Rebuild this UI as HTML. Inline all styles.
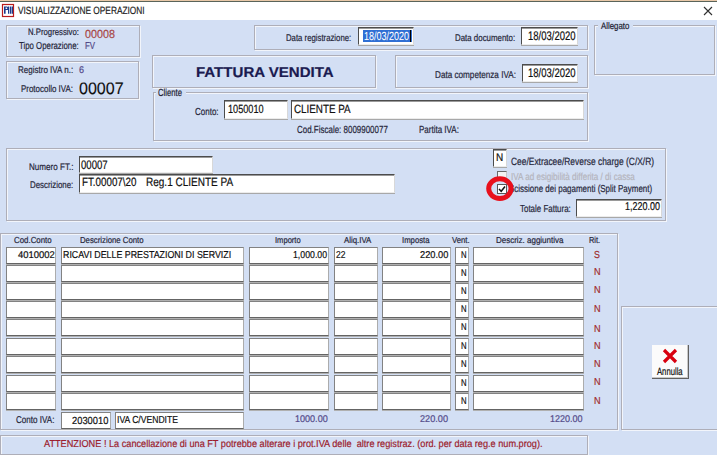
<!DOCTYPE html>
<html><head><meta charset="utf-8"><style>
html,body{margin:0;padding:0}
body{width:717px;height:455px;overflow:hidden;position:relative;background:#d3dff4;font-family:"Liberation Sans",sans-serif}
div{-webkit-text-stroke:0.2px currentColor;text-rendering:geometricPrecision}
</style></head><body>
<div style="position:absolute;left:0px;top:0px;width:717px;height:1px;background:#e8c8a8"></div>
<div style="position:absolute;left:0px;top:1px;width:717px;height:1px;background:#5a645a"></div>
<div style="position:absolute;left:0px;top:2px;width:717px;height:18px;background:#fff"></div>
<svg style="position:absolute;left:0;top:0" width="16" height="20"><rect x="2.5" y="4.5" width="11" height="12" fill="#fff" stroke="#b81c1c" stroke-width="1.2"/><path d="M4 6.6h1.6v7.2H4zM5.6 6.6h1.2a1.6 1.6 0 0 1 0 3.4H5.6v-1h1a.7.7 0 0 0 0-1.4h-1zM8 6.6h1.3v7.2H8zM10 6.6h1.3v7.2H10zM11.8 6.6h1.2v7.2h-1.2z" fill="#1c3c8c"/></svg>
<div style="position:absolute;left:17.80px;top:6px;font-size:10.47px;line-height:11px;font-weight:normal;color:#1c1c1c;white-space:pre;transform:scaleX(0.7946);transform-origin:0 0;">VISUALIZZAZIONE OPERAZIONI</div>
<svg style="position:absolute;left:703px;top:6px" width="10" height="10"><path d="M1 1L9 9M9 1L1 9" stroke="#303030" stroke-width="1.1"/></svg>
<div style="position:absolute;left:6px;top:25px;width:134px;height:32px;border:1px solid #aeaeb8;box-shadow:1px 1px 0 #f2f5fb, inset 1px 1px 0 #f2f5fb;box-sizing:border-box"></div>
<div style="position:absolute;left:6px;top:61px;width:133px;height:38px;border:1px solid #aeaeb8;box-shadow:1px 1px 0 #f2f5fb, inset 1px 1px 0 #f2f5fb;box-sizing:border-box"></div>
<div style="position:absolute;left:254px;top:25px;width:334px;height:25px;border:1px solid #aeaeb8;box-shadow:1px 1px 0 #f2f5fb, inset 1px 1px 0 #f2f5fb;box-sizing:border-box"></div>
<div style="position:absolute;left:152px;top:55px;width:224px;height:33px;border:1px solid #aeaeb8;box-shadow:1px 1px 0 #f2f5fb, inset 1px 1px 0 #f2f5fb;box-sizing:border-box"></div>
<div style="position:absolute;left:395px;top:55px;width:193px;height:33px;border:1px solid #aeaeb8;box-shadow:1px 1px 0 #f2f5fb, inset 1px 1px 0 #f2f5fb;box-sizing:border-box"></div>
<div style="position:absolute;left:153px;top:92px;width:435px;height:49px;border:1px solid #aeaeb8;box-shadow:1px 1px 0 #f2f5fb, inset 1px 1px 0 #f2f5fb;box-sizing:border-box"></div>
<div style="position:absolute;left:594px;top:25px;width:121px;height:50px;border:1px solid #aeaeb8;box-shadow:1px 1px 0 #f2f5fb, inset 1px 1px 0 #f2f5fb;box-sizing:border-box"></div>
<div style="position:absolute;left:6px;top:148px;width:660px;height:73px;border:1px solid #aeaeb8;box-shadow:1px 1px 0 #f2f5fb, inset 1px 1px 0 #f2f5fb;box-sizing:border-box"></div>
<div style="position:absolute;left:0px;top:233px;width:618px;height:197px;border:1px solid #aeaeb8;box-shadow:1px 1px 0 #f2f5fb, inset 1px 1px 0 #f2f5fb;box-sizing:border-box"></div>
<div style="position:absolute;left:621px;top:306px;width:98px;height:124px;border:1px solid #aeaeb8;box-shadow:1px 1px 0 #f2f5fb, inset 1px 1px 0 #f2f5fb;box-sizing:border-box"></div>
<div style="position:absolute;left:0px;top:435px;width:588px;height:20px;border:1px solid #aeaeb8;box-shadow:1px 1px 0 #f2f5fb, inset 1px 1px 0 #f2f5fb;box-sizing:border-box"></div>
<div style="position:absolute;left:27.70px;top:27px;font-size:9.30px;line-height:10px;font-weight:normal;color:#26263a;white-space:pre;transform:scaleX(0.8344);transform-origin:0 0;">N.Progressivo:</div>
<div style="position:absolute;left:18.80px;top:41px;font-size:10.03px;line-height:11px;font-weight:normal;color:#26263a;white-space:pre;transform:scaleX(0.7811);transform-origin:0 0;">Tipo Operazione:</div>
<div style="position:absolute;left:84.80px;top:28px;font-size:11.77px;line-height:13px;font-weight:normal;color:#a84848;white-space:pre;transform:scaleX(0.9132);transform-origin:0 0;">00008</div>
<div style="position:absolute;left:84.80px;top:41px;font-size:10.03px;line-height:11px;font-weight:normal;color:#524888;white-space:pre;transform:scaleX(0.7802);transform-origin:0 0;">FV</div>
<div style="position:absolute;left:17.80px;top:65px;font-size:9.74px;line-height:11px;font-weight:normal;color:#26263a;white-space:pre;transform:scaleX(0.8246);transform-origin:0 0;">Registro IVA n.:</div>
<div style="position:absolute;left:79.00px;top:65px;font-size:9.74px;line-height:11px;font-weight:normal;color:#524888;white-space:pre;transform:scaleX(0.9234);transform-origin:0 0;">6</div>
<div style="position:absolute;left:21.00px;top:84px;font-size:9.74px;line-height:11px;font-weight:normal;color:#26263a;white-space:pre;transform:scaleX(0.8165);transform-origin:0 0;">Protocollo IVA:</div>
<div style="position:absolute;left:79.30px;top:79px;font-size:16.57px;line-height:19px;font-weight:normal;color:#101010;white-space:pre;transform:scaleX(0.9700);transform-origin:0 0;-webkit-text-stroke:0.1px #101010">00007</div>
<div style="position:absolute;left:286.30px;top:33px;font-size:9.74px;line-height:11px;font-weight:normal;color:#26263a;white-space:pre;transform:scaleX(0.7977);transform-origin:0 0;">Data registrazione:</div>
<div style="position:absolute;left:358px;top:27px;width:56px;height:18px;box-sizing:border-box;background:#fff;border-top:1px solid #4c4c4c;border-left:1px solid #4c4c4c;border-right:1px solid #d8d8d8;border-bottom:1px solid #ececec;box-shadow:inset 0 1px 0 #9a9a9a, 0 1px 0 #a8a8a8"></div>
<div style="position:absolute;left:363px;top:29.5px;width:48.5px;height:12.0px;background:#2f6fd4"></div>
<div style="position:absolute;left:364.00px;top:30px;font-size:11.77px;line-height:13px;font-weight:normal;color:#fff;white-space:pre;transform:scaleX(0.7637);transform-origin:0 0;-webkit-text-stroke:0.05px #fff">18/03/2020</div>
<div style="position:absolute;left:410px;top:29.5px;width:1px;height:12.0px;background:#000"></div>
<div style="position:absolute;left:454.50px;top:33px;font-size:9.74px;line-height:11px;font-weight:normal;color:#26263a;white-space:pre;transform:scaleX(0.8103);transform-origin:0 0;">Data documento:</div>
<div style="position:absolute;left:521px;top:27px;width:57px;height:18px;box-sizing:border-box;background:#fff;border-top:1px solid #4c4c4c;border-left:1px solid #4c4c4c;border-right:1px solid #d8d8d8;border-bottom:1px solid #ececec;box-shadow:inset 0 1px 0 #9a9a9a, 0 1px 0 #a8a8a8"></div>
<div style="position:absolute;left:527.50px;top:29px;font-size:12.50px;line-height:14px;font-weight:normal;color:#101010;white-space:pre;transform:scaleX(0.7592);transform-origin:0 0;">18/03/2020</div>
<div style="position:absolute;left:195.80px;top:65px;font-size:14.24px;line-height:16px;font-weight:bold;color:#1a1a50;white-space:pre;transform:scaleX(1.0575);transform-origin:0 0;">FATTURA VENDITA</div>
<div style="position:absolute;left:435.00px;top:70px;font-size:9.88px;line-height:11px;font-weight:normal;color:#26263a;white-space:pre;transform:scaleX(0.8252);transform-origin:0 0;">Data competenza IVA:</div>
<div style="position:absolute;left:522px;top:64px;width:56px;height:18px;box-sizing:border-box;background:#fff;border-top:1px solid #4c4c4c;border-left:1px solid #4c4c4c;border-right:1px solid #d8d8d8;border-bottom:1px solid #ececec;box-shadow:inset 0 1px 0 #9a9a9a, 0 1px 0 #a8a8a8"></div>
<div style="position:absolute;left:527.50px;top:66px;font-size:12.50px;line-height:14px;font-weight:normal;color:#101010;white-space:pre;transform:scaleX(0.7592);transform-origin:0 0;">18/03/2020</div>
<div style="position:absolute;left:156px;top:89px;width:30px;height:8px;background:#d3dff4"></div>
<div style="position:absolute;left:158.00px;top:88px;font-size:10.32px;line-height:11px;font-weight:normal;color:#202030;white-space:pre;transform:scaleX(0.7471);transform-origin:0 0;">Cliente</div>
<div style="position:absolute;left:194.70px;top:107px;font-size:10.17px;line-height:11px;font-weight:normal;color:#26263a;white-space:pre;transform:scaleX(0.7874);transform-origin:0 0;">Conto:</div>
<div style="position:absolute;left:224px;top:100px;width:64px;height:19px;box-sizing:border-box;background:#fff;border-top:1px solid #4c4c4c;border-left:1px solid #4c4c4c;border-right:1px solid #d8d8d8;border-bottom:1px solid #ececec;box-shadow:inset 0 1px 0 #9a9a9a, 0 1px 0 #a8a8a8"></div>
<div style="position:absolute;left:227.80px;top:102px;font-size:11.92px;line-height:14px;font-weight:normal;color:#101010;white-space:pre;transform:scaleX(0.7673);transform-origin:0 0;">1050010</div>
<div style="position:absolute;left:291px;top:100px;width:293px;height:19px;box-sizing:border-box;background:#fff;border-top:1px solid #4c4c4c;border-left:1px solid #4c4c4c;border-right:1px solid #d8d8d8;border-bottom:1px solid #ececec;box-shadow:inset 0 1px 0 #9a9a9a, 0 1px 0 #a8a8a8"></div>
<div style="position:absolute;left:293.80px;top:102px;font-size:11.92px;line-height:14px;font-weight:normal;color:#101010;white-space:pre;transform:scaleX(0.8258);transform-origin:0 0;">CLIENTE PA</div>
<div style="position:absolute;left:297.30px;top:125px;font-size:10.32px;line-height:11px;font-weight:normal;color:#26263a;white-space:pre;transform:scaleX(0.7729);transform-origin:0 0;">Cod.Fiscale: 8009900077</div>
<div style="position:absolute;left:418.60px;top:125px;font-size:10.32px;line-height:11px;font-weight:normal;color:#26263a;white-space:pre;transform:scaleX(0.7759);transform-origin:0 0;">Partita IVA:</div>
<div style="position:absolute;left:598px;top:22px;width:35px;height:8px;background:#d3dff4"></div>
<div style="position:absolute;left:601.00px;top:21px;font-size:9.45px;line-height:11px;font-weight:normal;color:#202030;white-space:pre;transform:scaleX(0.8288);transform-origin:0 0;">Allegato</div>
<div style="position:absolute;left:28.90px;top:162px;font-size:9.59px;line-height:11px;font-weight:normal;color:#26263a;white-space:pre;transform:scaleX(0.8433);transform-origin:0 0;">Numero FT.:</div>
<div style="position:absolute;left:79px;top:156px;width:134px;height:16.5px;box-sizing:border-box;background:#fff;border-top:1px solid #4c4c4c;border-left:1px solid #4c4c4c;border-right:1px solid #d8d8d8;border-bottom:1px solid #ececec;box-shadow:inset 0 1px 0 #9a9a9a, 0 1px 0 #a8a8a8"></div>
<div style="position:absolute;left:80.90px;top:158px;font-size:12.35px;line-height:14px;font-weight:normal;color:#101010;white-space:pre;transform:scaleX(0.7742);transform-origin:0 0;">00007</div>
<div style="position:absolute;left:29.60px;top:180px;font-size:9.74px;line-height:11px;font-weight:normal;color:#26263a;white-space:pre;transform:scaleX(0.8081);transform-origin:0 0;">Descrizione:</div>
<div style="position:absolute;left:79px;top:174px;width:316px;height:18.5px;box-sizing:border-box;background:#fff;border-top:1px solid #4c4c4c;border-left:1px solid #4c4c4c;border-right:1px solid #d8d8d8;border-bottom:1px solid #ececec;box-shadow:inset 0 1px 0 #9a9a9a, 0 1px 0 #a8a8a8"></div>
<div style="position:absolute;left:81.60px;top:175px;font-size:12.06px;line-height:14px;font-weight:normal;color:#101010;white-space:pre;transform:scaleX(0.8125);transform-origin:0 0;">FT.00007\20</div>
<div style="position:absolute;left:146.10px;top:175px;font-size:12.06px;line-height:14px;font-weight:normal;color:#101010;white-space:pre;transform:scaleX(0.8302);transform-origin:0 0;">Reg.1 CLIENTE PA</div>
<div style="position:absolute;left:493px;top:149px;width:13.5px;height:18px;box-sizing:border-box;background:#fff;border-top:1px solid #4c4c4c;border-left:1px solid #4c4c4c;border-right:1px solid #d8d8d8;border-bottom:1px solid #ececec;box-shadow:inset 0 1px 0 #9a9a9a, 0 1px 0 #a8a8a8"></div>
<div style="position:absolute;left:496.20px;top:152px;font-size:11.05px;line-height:12px;font-weight:normal;color:#101010;white-space:pre;transform:scaleX(0.9028);transform-origin:0 0;">N</div>
<div style="position:absolute;left:511.00px;top:157px;font-size:10.47px;line-height:11px;font-weight:normal;color:#26263a;white-space:pre;transform:scaleX(0.8035);transform-origin:0 0;">Cee/Extracee/Reverse charge (C/X/R)</div>
<div style="position:absolute;left:497px;top:171px;width:10px;height:10px;box-sizing:border-box;border:1px solid #6a6a6a;border-right-color:#c8c8c8;background:#f4f4f4"></div>
<div style="position:absolute;left:511.00px;top:172px;font-size:10.17px;line-height:11px;font-weight:normal;color:#b4b4bc;white-space:pre;transform:scaleX(0.7963);transform-origin:0 0;">IVA ad esigibilità differita / di cassa</div>
<div style="position:absolute;left:497px;top:184px;width:10px;height:9.5px;box-sizing:border-box;border:1px solid #585858;background:#fff"></div>
<svg style="position:absolute;left:497px;top:184px" width="10" height="10"><path d="M2 5L4.2 7.3L8 2.5" fill="none" stroke="#111" stroke-width="1.5"/></svg>
<div style="position:absolute;left:509.00px;top:184px;font-size:10.17px;line-height:11px;font-weight:normal;color:#26263a;white-space:pre;transform:scaleX(0.7851);transform-origin:0 0;">Scissione dei pagamenti (Split Payment)</div>
<svg style="position:absolute;left:485px;top:176px" width="30" height="26"><ellipse cx="14.9" cy="12.6" rx="11.2" ry="9.8" fill="none" stroke="#e8101c" stroke-width="5"/></svg>
<div style="position:absolute;left:520.20px;top:204px;font-size:10.17px;line-height:11px;font-weight:normal;color:#26263a;white-space:pre;transform:scaleX(0.7827);transform-origin:0 0;">Totale Fattura:</div>
<div style="position:absolute;left:576px;top:198.5px;width:86px;height:18.5px;box-sizing:border-box;background:#fff;border-top:1px solid #4c4c4c;border-left:1px solid #4c4c4c;border-right:1px solid #d8d8d8;border-bottom:1px solid #ececec;box-shadow:inset 0 1px 0 #9a9a9a, 0 1px 0 #a8a8a8"></div>
<div style="position:absolute;left:624.90px;top:201px;font-size:11.34px;line-height:12px;font-weight:normal;color:#101010;white-space:pre;transform:scaleX(0.7907);transform-origin:0 0;">1,220.00</div>
<div style="position:absolute;left:14.20px;top:235px;font-size:8.72px;line-height:10px;font-weight:normal;color:#26263a;white-space:pre;transform:scaleX(0.9042);transform-origin:0 0;">Cod.Conto</div>
<div style="position:absolute;left:80.10px;top:235px;font-size:8.72px;line-height:10px;font-weight:normal;color:#26263a;white-space:pre;transform:scaleX(0.8926);transform-origin:0 0;">Descrizione Conto</div>
<div style="position:absolute;left:275.30px;top:235px;font-size:8.72px;line-height:10px;font-weight:normal;color:#26263a;white-space:pre;transform:scaleX(0.8693);transform-origin:0 0;">Importo</div>
<div style="position:absolute;left:344.20px;top:235px;font-size:8.72px;line-height:10px;font-weight:normal;color:#26263a;white-space:pre;transform:scaleX(0.8988);transform-origin:0 0;">Aliq.IVA</div>
<div style="position:absolute;left:401.80px;top:235px;font-size:8.72px;line-height:10px;font-weight:normal;color:#26263a;white-space:pre;transform:scaleX(0.8895);transform-origin:0 0;">Imposta</div>
<div style="position:absolute;left:452.00px;top:235px;font-size:8.72px;line-height:10px;font-weight:normal;color:#26263a;white-space:pre;transform:scaleX(0.8851);transform-origin:0 0;">Vent.</div>
<div style="position:absolute;left:496.20px;top:235px;font-size:8.72px;line-height:10px;font-weight:normal;color:#26263a;white-space:pre;transform:scaleX(0.9147);transform-origin:0 0;">Descriz. aggiuntiva</div>
<div style="position:absolute;left:589.00px;top:235px;font-size:8.72px;line-height:10px;font-weight:normal;color:#26263a;white-space:pre;transform:scaleX(0.8485);transform-origin:0 0;">Rit.</div>
<div style="position:absolute;left:6px;top:247px;width:50px;height:17px;box-sizing:border-box;background:#fff;border:1px solid #828282;border-right-color:#acacac;border-bottom-color:#646464;box-shadow:0 1px 0 #b0b0b0"></div>
<div style="position:absolute;left:60.5px;top:247px;width:183.5px;height:17px;box-sizing:border-box;background:#fff;border:1px solid #828282;border-right-color:#acacac;border-bottom-color:#646464;box-shadow:0 1px 0 #b0b0b0"></div>
<div style="position:absolute;left:248.5px;top:247px;width:80.5px;height:17px;box-sizing:border-box;background:#fff;border:1px solid #828282;border-right-color:#acacac;border-bottom-color:#646464;box-shadow:0 1px 0 #b0b0b0"></div>
<div style="position:absolute;left:333.5px;top:247px;width:44.5px;height:17px;box-sizing:border-box;background:#fff;border:1px solid #828282;border-right-color:#acacac;border-bottom-color:#646464;box-shadow:0 1px 0 #b0b0b0"></div>
<div style="position:absolute;left:381.5px;top:247px;width:69.0px;height:17px;box-sizing:border-box;background:#fff;border:1px solid #828282;border-right-color:#acacac;border-bottom-color:#646464;box-shadow:0 1px 0 #b0b0b0"></div>
<div style="position:absolute;left:455px;top:247px;width:13.5px;height:17px;box-sizing:border-box;background:#fff;border:1px solid #828282;border-right-color:#acacac;border-bottom-color:#646464;box-shadow:0 1px 0 #b0b0b0"></div>
<div style="position:absolute;left:472.5px;top:247px;width:111.5px;height:17px;box-sizing:border-box;background:#fff;border:1px solid #828282;border-right-color:#acacac;border-bottom-color:#646464;box-shadow:0 1px 0 #b0b0b0"></div>
<div style="position:absolute;left:460.80px;top:250px;font-size:9.74px;line-height:11px;font-weight:normal;color:#101010;white-space:pre;transform:scaleX(0.7965);transform-origin:0 0;">N</div>
<div style="position:absolute;left:593.70px;top:250px;font-size:10.17px;line-height:11px;font-weight:normal;color:#a02a2a;white-space:pre;transform:scaleX(0.8694);transform-origin:0 0;">S</div>
<div style="position:absolute;left:6px;top:265px;width:50px;height:17px;box-sizing:border-box;background:#fff;border:1px solid #828282;border-right-color:#acacac;border-bottom-color:#646464;box-shadow:0 1px 0 #b0b0b0"></div>
<div style="position:absolute;left:60.5px;top:265px;width:183.5px;height:17px;box-sizing:border-box;background:#fff;border:1px solid #828282;border-right-color:#acacac;border-bottom-color:#646464;box-shadow:0 1px 0 #b0b0b0"></div>
<div style="position:absolute;left:248.5px;top:265px;width:80.5px;height:17px;box-sizing:border-box;background:#fff;border:1px solid #828282;border-right-color:#acacac;border-bottom-color:#646464;box-shadow:0 1px 0 #b0b0b0"></div>
<div style="position:absolute;left:333.5px;top:265px;width:44.5px;height:17px;box-sizing:border-box;background:#fff;border:1px solid #828282;border-right-color:#acacac;border-bottom-color:#646464;box-shadow:0 1px 0 #b0b0b0"></div>
<div style="position:absolute;left:381.5px;top:265px;width:69.0px;height:17px;box-sizing:border-box;background:#fff;border:1px solid #828282;border-right-color:#acacac;border-bottom-color:#646464;box-shadow:0 1px 0 #b0b0b0"></div>
<div style="position:absolute;left:455px;top:265px;width:13.5px;height:17px;box-sizing:border-box;background:#fff;border:1px solid #828282;border-right-color:#acacac;border-bottom-color:#646464;box-shadow:0 1px 0 #b0b0b0"></div>
<div style="position:absolute;left:472.5px;top:265px;width:111.5px;height:17px;box-sizing:border-box;background:#fff;border:1px solid #828282;border-right-color:#acacac;border-bottom-color:#646464;box-shadow:0 1px 0 #b0b0b0"></div>
<div style="position:absolute;left:460.80px;top:268px;font-size:9.74px;line-height:11px;font-weight:normal;color:#101010;white-space:pre;transform:scaleX(0.7965);transform-origin:0 0;">N</div>
<div style="position:absolute;left:593.70px;top:267px;font-size:10.17px;line-height:11px;font-weight:normal;color:#a02a2a;white-space:pre;transform:scaleX(0.8985);transform-origin:0 0;">N</div>
<div style="position:absolute;left:6px;top:283px;width:50px;height:17px;box-sizing:border-box;background:#fff;border:1px solid #828282;border-right-color:#acacac;border-bottom-color:#646464;box-shadow:0 1px 0 #b0b0b0"></div>
<div style="position:absolute;left:60.5px;top:283px;width:183.5px;height:17px;box-sizing:border-box;background:#fff;border:1px solid #828282;border-right-color:#acacac;border-bottom-color:#646464;box-shadow:0 1px 0 #b0b0b0"></div>
<div style="position:absolute;left:248.5px;top:283px;width:80.5px;height:17px;box-sizing:border-box;background:#fff;border:1px solid #828282;border-right-color:#acacac;border-bottom-color:#646464;box-shadow:0 1px 0 #b0b0b0"></div>
<div style="position:absolute;left:333.5px;top:283px;width:44.5px;height:17px;box-sizing:border-box;background:#fff;border:1px solid #828282;border-right-color:#acacac;border-bottom-color:#646464;box-shadow:0 1px 0 #b0b0b0"></div>
<div style="position:absolute;left:381.5px;top:283px;width:69.0px;height:17px;box-sizing:border-box;background:#fff;border:1px solid #828282;border-right-color:#acacac;border-bottom-color:#646464;box-shadow:0 1px 0 #b0b0b0"></div>
<div style="position:absolute;left:455px;top:283px;width:13.5px;height:17px;box-sizing:border-box;background:#fff;border:1px solid #828282;border-right-color:#acacac;border-bottom-color:#646464;box-shadow:0 1px 0 #b0b0b0"></div>
<div style="position:absolute;left:472.5px;top:283px;width:111.5px;height:17px;box-sizing:border-box;background:#fff;border:1px solid #828282;border-right-color:#acacac;border-bottom-color:#646464;box-shadow:0 1px 0 #b0b0b0"></div>
<div style="position:absolute;left:460.80px;top:286px;font-size:9.74px;line-height:11px;font-weight:normal;color:#101010;white-space:pre;transform:scaleX(0.7965);transform-origin:0 0;">N</div>
<div style="position:absolute;left:593.70px;top:285px;font-size:10.17px;line-height:11px;font-weight:normal;color:#a02a2a;white-space:pre;transform:scaleX(0.8985);transform-origin:0 0;">N</div>
<div style="position:absolute;left:6px;top:301px;width:50px;height:17px;box-sizing:border-box;background:#fff;border:1px solid #828282;border-right-color:#acacac;border-bottom-color:#646464;box-shadow:0 1px 0 #b0b0b0"></div>
<div style="position:absolute;left:60.5px;top:301px;width:183.5px;height:17px;box-sizing:border-box;background:#fff;border:1px solid #828282;border-right-color:#acacac;border-bottom-color:#646464;box-shadow:0 1px 0 #b0b0b0"></div>
<div style="position:absolute;left:248.5px;top:301px;width:80.5px;height:17px;box-sizing:border-box;background:#fff;border:1px solid #828282;border-right-color:#acacac;border-bottom-color:#646464;box-shadow:0 1px 0 #b0b0b0"></div>
<div style="position:absolute;left:333.5px;top:301px;width:44.5px;height:17px;box-sizing:border-box;background:#fff;border:1px solid #828282;border-right-color:#acacac;border-bottom-color:#646464;box-shadow:0 1px 0 #b0b0b0"></div>
<div style="position:absolute;left:381.5px;top:301px;width:69.0px;height:17px;box-sizing:border-box;background:#fff;border:1px solid #828282;border-right-color:#acacac;border-bottom-color:#646464;box-shadow:0 1px 0 #b0b0b0"></div>
<div style="position:absolute;left:455px;top:301px;width:13.5px;height:17px;box-sizing:border-box;background:#fff;border:1px solid #828282;border-right-color:#acacac;border-bottom-color:#646464;box-shadow:0 1px 0 #b0b0b0"></div>
<div style="position:absolute;left:472.5px;top:301px;width:111.5px;height:17px;box-sizing:border-box;background:#fff;border:1px solid #828282;border-right-color:#acacac;border-bottom-color:#646464;box-shadow:0 1px 0 #b0b0b0"></div>
<div style="position:absolute;left:460.80px;top:304px;font-size:9.74px;line-height:11px;font-weight:normal;color:#101010;white-space:pre;transform:scaleX(0.7965);transform-origin:0 0;">N</div>
<div style="position:absolute;left:593.70px;top:304px;font-size:10.17px;line-height:11px;font-weight:normal;color:#a02a2a;white-space:pre;transform:scaleX(0.8985);transform-origin:0 0;">N</div>
<div style="position:absolute;left:6px;top:319px;width:50px;height:17px;box-sizing:border-box;background:#fff;border:1px solid #828282;border-right-color:#acacac;border-bottom-color:#646464;box-shadow:0 1px 0 #b0b0b0"></div>
<div style="position:absolute;left:60.5px;top:319px;width:183.5px;height:17px;box-sizing:border-box;background:#fff;border:1px solid #828282;border-right-color:#acacac;border-bottom-color:#646464;box-shadow:0 1px 0 #b0b0b0"></div>
<div style="position:absolute;left:248.5px;top:319px;width:80.5px;height:17px;box-sizing:border-box;background:#fff;border:1px solid #828282;border-right-color:#acacac;border-bottom-color:#646464;box-shadow:0 1px 0 #b0b0b0"></div>
<div style="position:absolute;left:333.5px;top:319px;width:44.5px;height:17px;box-sizing:border-box;background:#fff;border:1px solid #828282;border-right-color:#acacac;border-bottom-color:#646464;box-shadow:0 1px 0 #b0b0b0"></div>
<div style="position:absolute;left:381.5px;top:319px;width:69.0px;height:17px;box-sizing:border-box;background:#fff;border:1px solid #828282;border-right-color:#acacac;border-bottom-color:#646464;box-shadow:0 1px 0 #b0b0b0"></div>
<div style="position:absolute;left:455px;top:319px;width:13.5px;height:17px;box-sizing:border-box;background:#fff;border:1px solid #828282;border-right-color:#acacac;border-bottom-color:#646464;box-shadow:0 1px 0 #b0b0b0"></div>
<div style="position:absolute;left:472.5px;top:319px;width:111.5px;height:17px;box-sizing:border-box;background:#fff;border:1px solid #828282;border-right-color:#acacac;border-bottom-color:#646464;box-shadow:0 1px 0 #b0b0b0"></div>
<div style="position:absolute;left:460.80px;top:322px;font-size:9.74px;line-height:11px;font-weight:normal;color:#101010;white-space:pre;transform:scaleX(0.7965);transform-origin:0 0;">N</div>
<div style="position:absolute;left:593.70px;top:324px;font-size:10.17px;line-height:11px;font-weight:normal;color:#a02a2a;white-space:pre;transform:scaleX(0.8985);transform-origin:0 0;">N</div>
<div style="position:absolute;left:6px;top:338px;width:50px;height:17px;box-sizing:border-box;background:#fff;border:1px solid #828282;border-right-color:#acacac;border-bottom-color:#646464;box-shadow:0 1px 0 #b0b0b0"></div>
<div style="position:absolute;left:60.5px;top:338px;width:183.5px;height:17px;box-sizing:border-box;background:#fff;border:1px solid #828282;border-right-color:#acacac;border-bottom-color:#646464;box-shadow:0 1px 0 #b0b0b0"></div>
<div style="position:absolute;left:248.5px;top:338px;width:80.5px;height:17px;box-sizing:border-box;background:#fff;border:1px solid #828282;border-right-color:#acacac;border-bottom-color:#646464;box-shadow:0 1px 0 #b0b0b0"></div>
<div style="position:absolute;left:333.5px;top:338px;width:44.5px;height:17px;box-sizing:border-box;background:#fff;border:1px solid #828282;border-right-color:#acacac;border-bottom-color:#646464;box-shadow:0 1px 0 #b0b0b0"></div>
<div style="position:absolute;left:381.5px;top:338px;width:69.0px;height:17px;box-sizing:border-box;background:#fff;border:1px solid #828282;border-right-color:#acacac;border-bottom-color:#646464;box-shadow:0 1px 0 #b0b0b0"></div>
<div style="position:absolute;left:455px;top:338px;width:13.5px;height:17px;box-sizing:border-box;background:#fff;border:1px solid #828282;border-right-color:#acacac;border-bottom-color:#646464;box-shadow:0 1px 0 #b0b0b0"></div>
<div style="position:absolute;left:472.5px;top:338px;width:111.5px;height:17px;box-sizing:border-box;background:#fff;border:1px solid #828282;border-right-color:#acacac;border-bottom-color:#646464;box-shadow:0 1px 0 #b0b0b0"></div>
<div style="position:absolute;left:460.80px;top:341px;font-size:9.74px;line-height:11px;font-weight:normal;color:#101010;white-space:pre;transform:scaleX(0.7965);transform-origin:0 0;">N</div>
<div style="position:absolute;left:593.70px;top:341px;font-size:10.17px;line-height:11px;font-weight:normal;color:#a02a2a;white-space:pre;transform:scaleX(0.8985);transform-origin:0 0;">N</div>
<div style="position:absolute;left:6px;top:356px;width:50px;height:17px;box-sizing:border-box;background:#fff;border:1px solid #828282;border-right-color:#acacac;border-bottom-color:#646464;box-shadow:0 1px 0 #b0b0b0"></div>
<div style="position:absolute;left:60.5px;top:356px;width:183.5px;height:17px;box-sizing:border-box;background:#fff;border:1px solid #828282;border-right-color:#acacac;border-bottom-color:#646464;box-shadow:0 1px 0 #b0b0b0"></div>
<div style="position:absolute;left:248.5px;top:356px;width:80.5px;height:17px;box-sizing:border-box;background:#fff;border:1px solid #828282;border-right-color:#acacac;border-bottom-color:#646464;box-shadow:0 1px 0 #b0b0b0"></div>
<div style="position:absolute;left:333.5px;top:356px;width:44.5px;height:17px;box-sizing:border-box;background:#fff;border:1px solid #828282;border-right-color:#acacac;border-bottom-color:#646464;box-shadow:0 1px 0 #b0b0b0"></div>
<div style="position:absolute;left:381.5px;top:356px;width:69.0px;height:17px;box-sizing:border-box;background:#fff;border:1px solid #828282;border-right-color:#acacac;border-bottom-color:#646464;box-shadow:0 1px 0 #b0b0b0"></div>
<div style="position:absolute;left:455px;top:356px;width:13.5px;height:17px;box-sizing:border-box;background:#fff;border:1px solid #828282;border-right-color:#acacac;border-bottom-color:#646464;box-shadow:0 1px 0 #b0b0b0"></div>
<div style="position:absolute;left:472.5px;top:356px;width:111.5px;height:17px;box-sizing:border-box;background:#fff;border:1px solid #828282;border-right-color:#acacac;border-bottom-color:#646464;box-shadow:0 1px 0 #b0b0b0"></div>
<div style="position:absolute;left:460.80px;top:359px;font-size:9.74px;line-height:11px;font-weight:normal;color:#101010;white-space:pre;transform:scaleX(0.7965);transform-origin:0 0;">N</div>
<div style="position:absolute;left:593.70px;top:359px;font-size:10.17px;line-height:11px;font-weight:normal;color:#a02a2a;white-space:pre;transform:scaleX(0.8985);transform-origin:0 0;">N</div>
<div style="position:absolute;left:6px;top:375px;width:50px;height:17px;box-sizing:border-box;background:#fff;border:1px solid #828282;border-right-color:#acacac;border-bottom-color:#646464;box-shadow:0 1px 0 #b0b0b0"></div>
<div style="position:absolute;left:60.5px;top:375px;width:183.5px;height:17px;box-sizing:border-box;background:#fff;border:1px solid #828282;border-right-color:#acacac;border-bottom-color:#646464;box-shadow:0 1px 0 #b0b0b0"></div>
<div style="position:absolute;left:248.5px;top:375px;width:80.5px;height:17px;box-sizing:border-box;background:#fff;border:1px solid #828282;border-right-color:#acacac;border-bottom-color:#646464;box-shadow:0 1px 0 #b0b0b0"></div>
<div style="position:absolute;left:333.5px;top:375px;width:44.5px;height:17px;box-sizing:border-box;background:#fff;border:1px solid #828282;border-right-color:#acacac;border-bottom-color:#646464;box-shadow:0 1px 0 #b0b0b0"></div>
<div style="position:absolute;left:381.5px;top:375px;width:69.0px;height:17px;box-sizing:border-box;background:#fff;border:1px solid #828282;border-right-color:#acacac;border-bottom-color:#646464;box-shadow:0 1px 0 #b0b0b0"></div>
<div style="position:absolute;left:455px;top:375px;width:13.5px;height:17px;box-sizing:border-box;background:#fff;border:1px solid #828282;border-right-color:#acacac;border-bottom-color:#646464;box-shadow:0 1px 0 #b0b0b0"></div>
<div style="position:absolute;left:472.5px;top:375px;width:111.5px;height:17px;box-sizing:border-box;background:#fff;border:1px solid #828282;border-right-color:#acacac;border-bottom-color:#646464;box-shadow:0 1px 0 #b0b0b0"></div>
<div style="position:absolute;left:460.80px;top:378px;font-size:9.74px;line-height:11px;font-weight:normal;color:#101010;white-space:pre;transform:scaleX(0.7965);transform-origin:0 0;">N</div>
<div style="position:absolute;left:593.70px;top:377px;font-size:10.17px;line-height:11px;font-weight:normal;color:#a02a2a;white-space:pre;transform:scaleX(0.8985);transform-origin:0 0;">N</div>
<div style="position:absolute;left:6px;top:393px;width:50px;height:17px;box-sizing:border-box;background:#fff;border:1px solid #828282;border-right-color:#acacac;border-bottom-color:#646464;box-shadow:0 1px 0 #b0b0b0"></div>
<div style="position:absolute;left:60.5px;top:393px;width:183.5px;height:17px;box-sizing:border-box;background:#fff;border:1px solid #828282;border-right-color:#acacac;border-bottom-color:#646464;box-shadow:0 1px 0 #b0b0b0"></div>
<div style="position:absolute;left:248.5px;top:393px;width:80.5px;height:17px;box-sizing:border-box;background:#fff;border:1px solid #828282;border-right-color:#acacac;border-bottom-color:#646464;box-shadow:0 1px 0 #b0b0b0"></div>
<div style="position:absolute;left:333.5px;top:393px;width:44.5px;height:17px;box-sizing:border-box;background:#fff;border:1px solid #828282;border-right-color:#acacac;border-bottom-color:#646464;box-shadow:0 1px 0 #b0b0b0"></div>
<div style="position:absolute;left:381.5px;top:393px;width:69.0px;height:17px;box-sizing:border-box;background:#fff;border:1px solid #828282;border-right-color:#acacac;border-bottom-color:#646464;box-shadow:0 1px 0 #b0b0b0"></div>
<div style="position:absolute;left:455px;top:393px;width:13.5px;height:17px;box-sizing:border-box;background:#fff;border:1px solid #828282;border-right-color:#acacac;border-bottom-color:#646464;box-shadow:0 1px 0 #b0b0b0"></div>
<div style="position:absolute;left:472.5px;top:393px;width:111.5px;height:17px;box-sizing:border-box;background:#fff;border:1px solid #828282;border-right-color:#acacac;border-bottom-color:#646464;box-shadow:0 1px 0 #b0b0b0"></div>
<div style="position:absolute;left:460.80px;top:396px;font-size:9.74px;line-height:11px;font-weight:normal;color:#101010;white-space:pre;transform:scaleX(0.7965);transform-origin:0 0;">N</div>
<div style="position:absolute;left:593.70px;top:396px;font-size:10.17px;line-height:11px;font-weight:normal;color:#a02a2a;white-space:pre;transform:scaleX(0.8985);transform-origin:0 0;">N</div>
<div style="position:absolute;left:17.60px;top:250px;font-size:9.74px;line-height:11px;font-weight:normal;color:#101010;white-space:pre;transform:scaleX(0.9707);transform-origin:0 0;">4010002</div>
<div style="position:absolute;left:62.50px;top:250px;font-size:10.03px;line-height:11px;font-weight:normal;color:#101010;white-space:pre;transform:scaleX(0.8836);transform-origin:0 0;">RICAVI DELLE PRESTAZIONI DI SERVIZI</div>
<div style="position:absolute;left:292.60px;top:250px;font-size:10.03px;line-height:11px;font-weight:normal;color:#101010;white-space:pre;transform:scaleX(0.8734);transform-origin:0 0;">1,000.00</div>
<div style="position:absolute;left:335.80px;top:250px;font-size:10.03px;line-height:11px;font-weight:normal;color:#101010;white-space:pre;transform:scaleX(0.8518);transform-origin:0 0;">22</div>
<div style="position:absolute;left:420.10px;top:250px;font-size:9.88px;line-height:11px;font-weight:normal;color:#101010;white-space:pre;transform:scaleX(0.9393);transform-origin:0 0;">220.00</div>
<div style="position:absolute;left:16.40px;top:415px;font-size:9.88px;line-height:11px;font-weight:normal;color:#26263a;white-space:pre;transform:scaleX(0.8159);transform-origin:0 0;">Conto IVA:</div>
<div style="position:absolute;left:61px;top:412px;width:50px;height:17px;box-sizing:border-box;background:#fff;border:1px solid #828282;border-right-color:#acacac;border-bottom-color:#646464;box-shadow:0 1px 0 #b0b0b0"></div>
<div style="position:absolute;left:72.00px;top:416px;font-size:10.32px;line-height:11px;font-weight:normal;color:#101010;white-space:pre;transform:scaleX(0.9060);transform-origin:0 0;">2030010</div>
<div style="position:absolute;left:115px;top:412px;width:129px;height:17px;box-sizing:border-box;background:#fff;border:1px solid #828282;border-right-color:#acacac;border-bottom-color:#646464;box-shadow:0 1px 0 #b0b0b0"></div>
<div style="position:absolute;left:116.70px;top:415px;font-size:10.17px;line-height:11px;font-weight:normal;color:#101010;white-space:pre;transform:scaleX(0.8465);transform-origin:0 0;">IVA C/VENDITE</div>
<div style="position:absolute;left:295.30px;top:414px;font-size:9.74px;line-height:11px;font-weight:normal;color:#544a8a;white-space:pre;transform:scaleX(0.9289);transform-origin:0 0;">1000.00</div>
<div style="position:absolute;left:420.00px;top:414px;font-size:9.74px;line-height:11px;font-weight:normal;color:#544a8a;white-space:pre;transform:scaleX(0.9399);transform-origin:0 0;">220.00</div>
<div style="position:absolute;left:550.00px;top:414px;font-size:9.74px;line-height:11px;font-weight:normal;color:#544a8a;white-space:pre;transform:scaleX(0.9260);transform-origin:0 0;">1220.00</div>
<div style="position:absolute;left:44.20px;top:439px;font-size:10.03px;line-height:11px;font-weight:normal;color:#9c1e2e;white-space:pre;transform:scaleX(0.9147);transform-origin:0 0;">ATTENZIONE ! La cancellazione di una FT potrebbe alterare i prot.IVA delle  altre registraz. (ord. per data reg.e num.prog).</div>
<div style="position:absolute;left:652px;top:345px;width:37px;height:34px;box-sizing:border-box;background:#fbfbfb;border-right:1px solid #606060;border-bottom:1px solid #606060;box-shadow:inset -1px -1px 0 #c8c8c8"></div>
<svg style="position:absolute;left:662px;top:348px" width="16" height="16"><path d="M2 2L14 14M14 2L2 14" stroke="#d8000f" stroke-width="3.2"/></svg>
<div style="position:absolute;left:657.40px;top:367px;font-size:10.47px;line-height:11px;font-weight:normal;color:#101010;white-space:pre;transform:scaleX(0.7331);transform-origin:0 0;">Annulla</div>
</body></html>
